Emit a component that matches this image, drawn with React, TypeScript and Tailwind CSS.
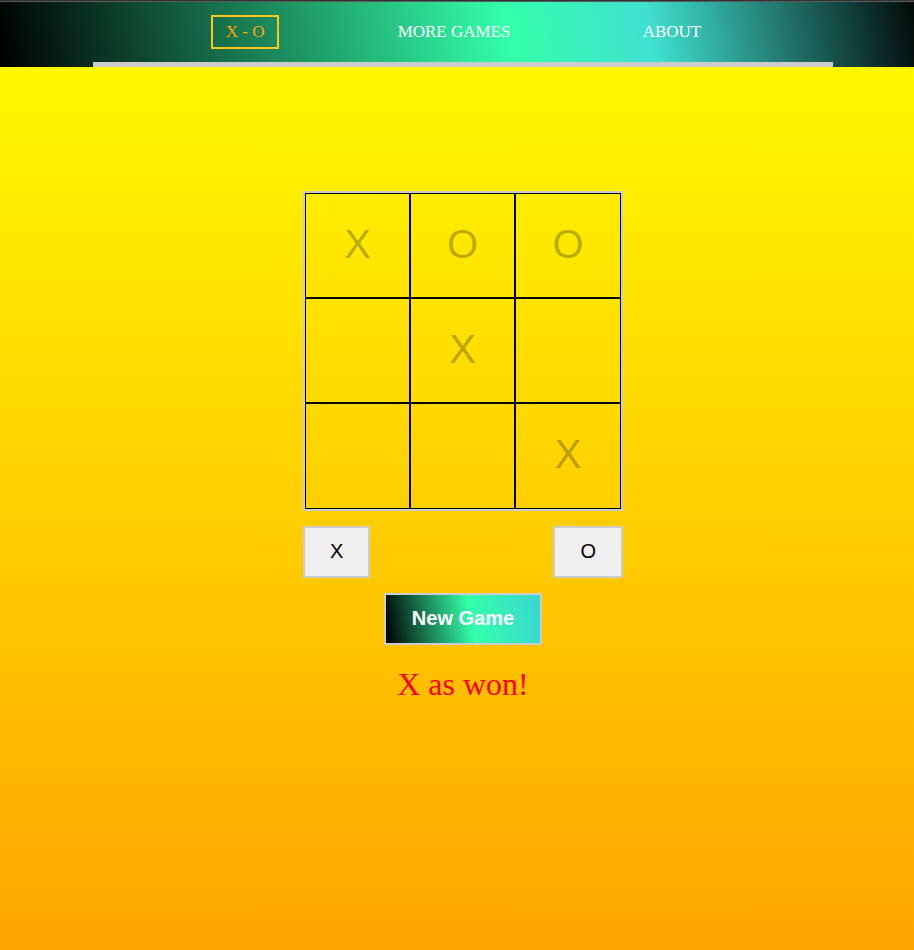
import { useState } from "react";

type Mark = "X" | "O" | "";

const finishedBoard: Mark[] = ["X", "O", "O", "", "X", "", "", "", "X"];
const emptyBoard: Mark[] = ["", "", "", "", "", "", "", "", ""];
const lines = [
  [0, 1, 2], [3, 4, 5], [6, 7, 8],
  [0, 3, 6], [1, 4, 7], [2, 5, 8],
  [0, 4, 8], [2, 4, 6],
];

function findWinner(board: Mark[]): Mark {
  const line = lines.find(([a, b, c]) => board[a] && board[a] === board[b] && board[a] === board[c]);
  return line ? board[line[0]] : "";
}

function Header() {
  return (
    <header className="border-t border-[#303030] bg-[linear-gradient(80deg,#000_0%,#33ffaa_55%,#40e0d0_70%,#000_100%)] bg-origin-border">
      <div className="h-px bg-[#5c5c5c]" />
      <nav className="mx-auto w-4/5 border-b-[5px] border-[#ccc]">
        <ul className="flex h-[60px] items-start justify-evenly pt-[13px] text-[17px] leading-5 text-white">
          <li>
            <a href="#game" className="block border-2 border-[#ffc61a] px-[13px] py-[5px] text-[#ffa500]">X - O</a>
          </li>
          <li className="pt-[7px] pr-[14px]"><a href="#games">MORE GAMES</a></li>
          <li className="pt-[7px] pr-[14px]"><a href="#about">ABOUT</a></li>
        </ul>
      </nav>
    </header>
  );
}

export default function App() {
  const [board, setBoard] = useState<Mark[]>(finishedBoard);
  const [turn, setTurn] = useState<Mark>("O");
  const winner = findWinner(board);

  const play = (index: number) => {
    setBoard(board.map((mark, i) => (i === index ? turn : mark)));
    setTurn(turn === "X" ? "O" : "X");
  };

  return (
    <div className="min-h-screen overflow-x-hidden bg-linear-to-b from-[#ffff00] to-[#ffa500] font-['Liberation_Serif',serif]">
      <div className="-mr-3">
        <Header />
        <main id="game" className="flex flex-col items-center pt-[124px] pb-10">
          <div className="w-80 font-['Liberation_Sans',sans-serif]">
            <div className="grid aspect-square grid-cols-[105fr_105fr_106fr] grid-rows-[105fr_105fr_106fr] border-2 border-[#ccc]">
              {board.map((mark, i) => (
                <button
                  key={i}
                  type="button"
                  aria-label={mark ? undefined : `Square ${i + 1}`}
                  disabled={winner !== "" || mark !== ""}
                  onClick={() => play(i)}
                  className="border border-black pb-1 text-[40px] leading-none text-black disabled:text-[#101010]/30"
                >
                  {mark}
                </button>
              ))}
            </div>
            <div className="mt-[15px] flex justify-between text-xl text-black">
              <button type="button" onClick={() => setTurn("X")} className="h-[52px] border-2 border-[#ccc] bg-[#efefef] px-[25px] pb-0.5">X</button>
              <button type="button" onClick={() => setTurn("O")} className="h-[52px] border-2 border-[#ccc] bg-[#efefef] px-[25px] pb-0.5">O</button>
            </div>
          </div>
          <button
            type="button"
            onClick={() => setBoard(emptyBoard)}
            className="mt-[15px] h-[52px] border-2 border-[#ccc] bg-[linear-gradient(80deg,#000_0%,#33ffaa_55%,#3ad6d0_100%)] px-[26px] pb-0.5 font-['Liberation_Sans',sans-serif] text-xl font-bold text-white"
          >
            New Game
          </button>
          <p className="mt-[21px] text-[32px] leading-9 text-[#ff0000]">{winner && `${winner} as won!`}</p>
        </main>
      </div>
    </div>
  );
}
